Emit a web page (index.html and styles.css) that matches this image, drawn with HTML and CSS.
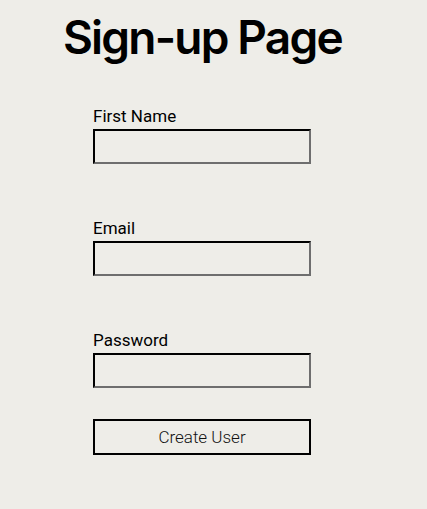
FILE: index.html
```html
<!DOCTYPE html>
<html>
<head>
<meta charset="utf-8">
<link rel="stylesheet" href="styles.css">
</head>
<body>
<h1 class="title">Sign-up Page</h1>
<form class="form">
  <div class="field">
    <label class="label" for="fn">First Name</label>
    <input class="input" id="fn" type="text">
  </div>
  <div class="field">
    <label class="label" for="em">Email</label>
    <input class="input" id="em" type="text">
  </div>
  <div class="field">
    <label class="label" for="pw">Password</label>
    <input class="input" id="pw" type="password">
  </div>
  <button class="button" type="button">Create User</button>
</form>
</body>
</html>
```
FILE: styles.css
```css
html, body {
  margin: 0;
  padding: 0;
  background: #eeede8;
}
body {
  font-family: Roboto, "Liberation Sans", sans-serif;
  color: #000;
}
.title {
  margin: 0;
  padding: 9px 0 0 63px;
  font-family: Inter, "Liberation Sans", sans-serif;
  font-weight: 600;
  font-size: 46px;
  line-height: 56px;
  letter-spacing: -1.8px;
}
.form {
  display: flex;
  flex-direction: column;
  padding: 41px 0 0 93px;
}
.field {
  display: flex;
  flex-direction: column;
  gap: 3px;
  margin-bottom: 54px;
}
.field:nth-child(3) {
  margin-bottom: 31px;
}
.label {
  font-size: 17px;
  line-height: 20px;
}
.input {
  box-sizing: border-box;
  width: 218px;
  height: 35px;
  margin: 0;
  border: 2px inset #767676;
  border-top-color: #1e1e1e;
  border-left-color: #1e1e1e;
  border-right-color: #6e6e6e;
  border-bottom-color: #6e6e6e;
  background: transparent;
}
.button {
  box-sizing: border-box;
  width: 218px;
  height: 36px;
  margin: 0;
  border: 2px solid #000;
  background: transparent;
  font-family: Roboto, sans-serif;
  font-weight: 300;
  font-size: 17px;
  color: #111;
}
```
